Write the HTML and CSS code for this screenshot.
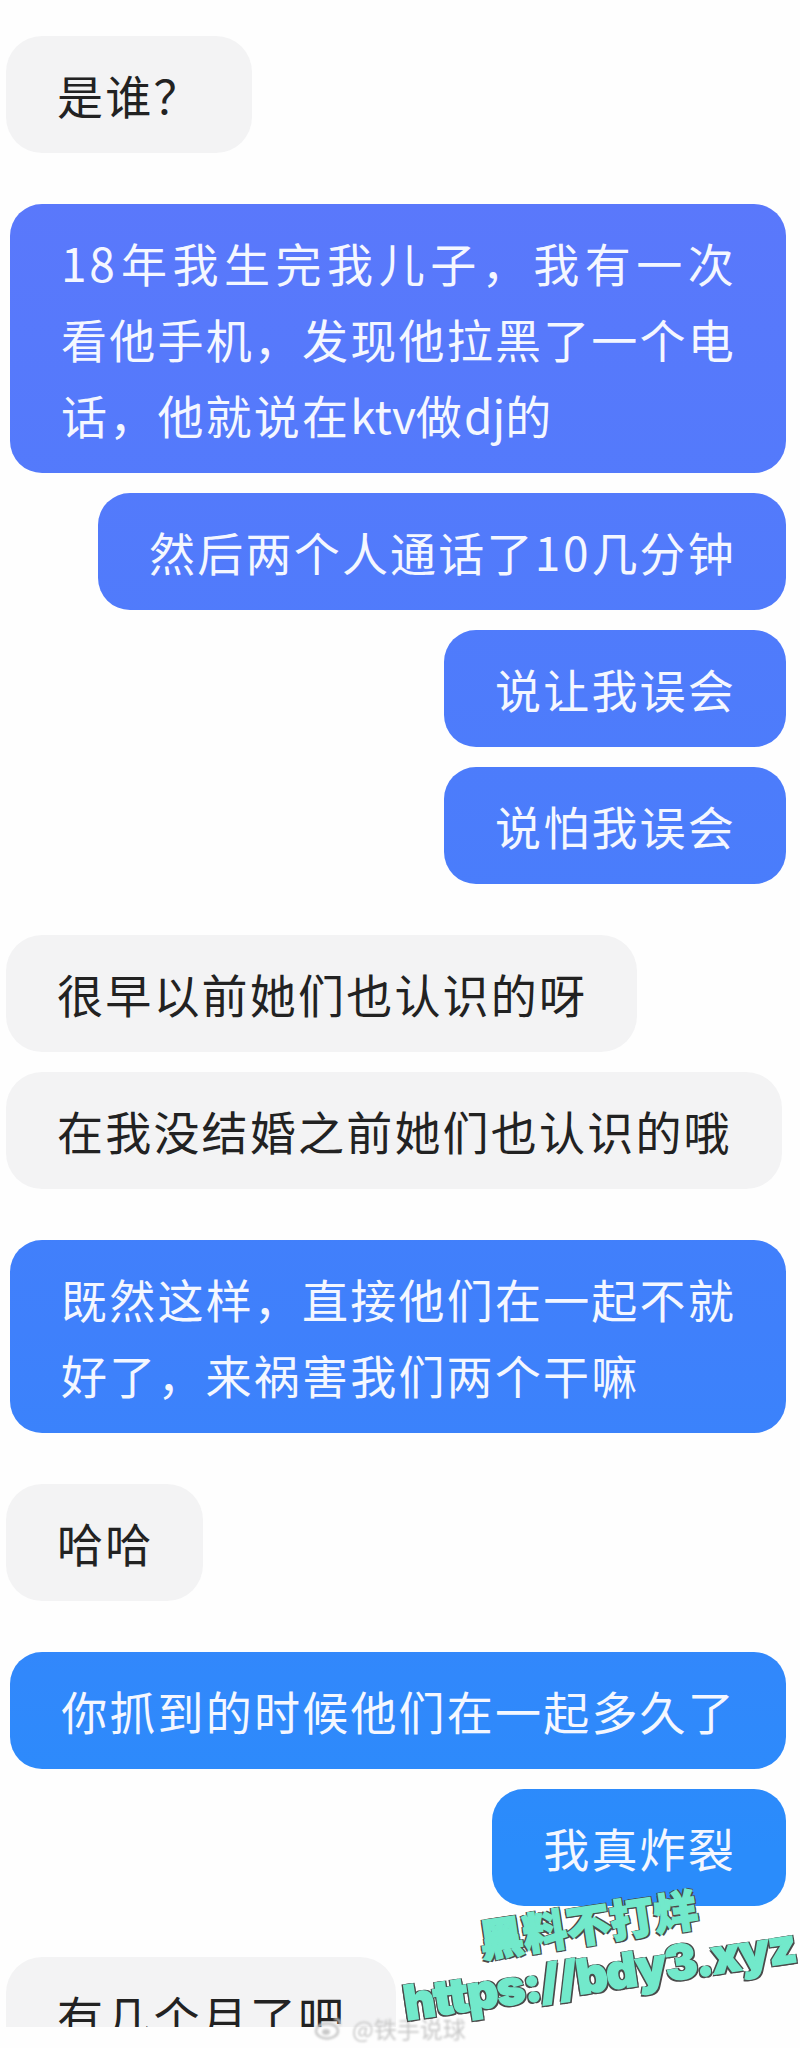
FILE: index.html
```html
<!DOCTYPE html>
<html>
<head>
    <meta charset="utf-8">
    <link rel="stylesheet" href="styles.css">
</head>
<body>
    <div class="chat">
        <div class="msg them">是谁？</div>

        <div class="msg me group"><span class="num">18</span>年我生完我儿子，我有一次看他手机，发现他拉黑了一个电话，他就说在<span class="lat">ktv</span>做<span class="lat">dj</span>的</div>
        <div class="msg me">然后两个人通话了<span class="num">10</span>几分钟</div>
        <div class="msg me">说让我误会</div>
        <div class="msg me">说怕我误会</div>

        <div class="msg them group">很早以前她们也认识的呀</div>
        <div class="msg them">在我没结婚之前她们也认识的哦</div>

        <div class="msg me group">既然这样，直接他们在一起不就好了，来祸害我们两个干嘛</div>

        <div class="msg them group">哈哈</div>

        <div class="msg me group">你抓到的时候他们在一起多久了</div>
        <div class="msg me">我真炸裂</div>

        <div class="msg them group">有几个月了吧</div>
    </div>

    <div class="weibo">
        <svg class="weibo-logo" width="30" height="24" viewBox="0 0 30 24">
            <ellipse cx="13" cy="15" rx="11" ry="7.5" fill="none" stroke="#c9c9c9" stroke-width="2.5"/>
            <ellipse cx="12" cy="16" rx="4" ry="3" fill="#c9c9c9"/>
            <path d="M20 3c4-1 7 2 6 7" fill="none" stroke="#d4d4d4" stroke-width="2"/>
        </svg>
        <span>@铁手说球</span>
    </div>

    <div class="stamp">
        <div class="stamp-cn">黑料不打烊</div>
        <div class="stamp-url">https://bdy3.xyz</div>
    </div>
</body>
</html>
```

FILE: styles.css
```css
html, body {
    height: 2048px;
    overflow: hidden;
}
body {
    position: relative;
    margin: 0;
    background-color: #fefefe;
    font-family: "Noto Sans CJK SC", "Noto Sans", sans-serif;
}
.chat {
    height: 1991px;
    padding-top: 36px;
    overflow: hidden;
    display: flex;
    flex-direction: column;
    gap: 20px;
}
.msg {
    width: fit-content;
    box-sizing: border-box;
    padding: 20px 50px 21px 51px;
    font-size: 46px;
    line-height: 76px;
    letter-spacing: 2.2px;
    text-align: justify;
}
.num {
    letter-spacing: 2.8px;
}
.lat {
    letter-spacing: 0;
}
.them {
    margin-left: 6px;
    background-color: #f3f3f4;
    color: #222;
    border-radius: 36px;
}
.me {
    align-self: flex-end;
    margin-right: 14px;
    max-width: 776px;
    color: #f4f7ff;
    border-radius: 32px;
    background: linear-gradient(#5a78fb 200px, #3f80fb 1330px, #2a8cfb 1850px) fixed;
}
.group {
    margin-top: 31px;
}
.weibo {
    position: absolute;
    left: 314px;
    top: 2015px;
    display: flex;
    align-items: center;
    gap: 8px;
    color: #c8c8c8;
    font-size: 23px;
    line-height: 26px;
    filter: blur(1px);
}
.stamp {
    position: absolute;
    left: 398px;
    top: 1896px;
    width: 402px;
    transform: rotate(-8.5deg);
    color: #72e9cb;
    font-weight: 900;
    -webkit-text-stroke: 1.5px #72e9cb;
    text-shadow: -2px 2px 0 #4a4a4a, 2px 2px 0 #4a4a4a, -2px -1px 0 #4a4a4a, 2px -1px 0 #4a4a4a;
}
.stamp-cn {
    font-size: 44px;
    line-height: 50px;
    padding-left: 84px;
}
.stamp-url {
    font-family: "Inter", sans-serif;
    font-weight: 900;
    font-size: 48px;
    line-height: 56px;
    letter-spacing: -1.2px;
    white-space: nowrap;
}
```
